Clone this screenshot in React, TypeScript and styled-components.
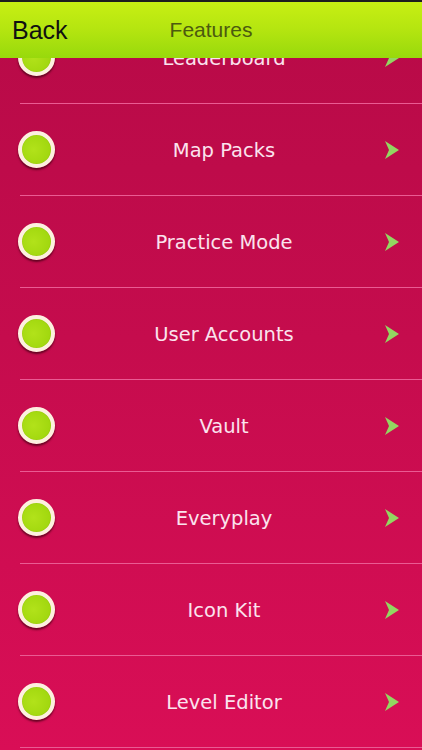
import React from 'react'
import styled, { createGlobalStyle } from 'styled-components'

const GlobalStyle = createGlobalStyle`
  html, body {
    margin: 0;
    padding: 0;
  }
  body {
    font-family: "DejaVu Sans", Verdana, sans-serif;
  }
`

const Screen = styled.div`
  position: relative;
  width: 422px;
  height: 750px;
  overflow: hidden;
  background: linear-gradient(180deg, #b70a47 0%, #c50c4d 45%, #d90e56 100%);
`

const Header = styled.header`
  position: absolute;
  top: 0;
  left: 0;
  right: 0;
  height: 58px;
  border-top: 2px solid #1e1e1e;
  box-sizing: border-box;
  background: linear-gradient(180deg, #c8ef13 0%, #b4e510 50%, #98d90c 100%);
  display: grid;
  grid-template-columns: 1fr auto 1fr;
  align-items: center;
  padding: 0 12px;
  z-index: 2;
`

const BackButton = styled.span`
  font-family: "Liberation Sans", Arial, sans-serif;
  font-size: 25px;
  color: #111;
  justify-self: start;
`

const Title = styled.span`
  font-family: "Liberation Sans", Arial, sans-serif;
  font-size: 21px;
  color: #4c5a0f;
`

const List = styled.ul`
  list-style: none;
  margin: 0;
  padding: 12px 0 0;
`

const Item = styled.li`
  display: block;
`

const Row = styled.div`
  height: 91px;
  display: flex;
  align-items: center;
  padding: 0 23px 0 18px;
`

const Bullet = styled.span`
  width: 37px;
  height: 37px;
  border-radius: 50%;
  box-sizing: border-box;
  border: 4px solid #fdf0df;
  background: radial-gradient(circle at 40% 50%, #b2e21a 0%, #a2d80f 70%, #93c90c 100%);
  box-shadow: 0 2px 2px rgba(70, 0, 20, 0.75), inset 0 0 1px rgba(0, 0, 0, 0.2);
  flex-shrink: 0;
`

const Label = styled.span`
  flex: 1;
  text-align: center;
  font-size: 19.5px;
  color: #fbe3ee;
  padding-left: 8px;
  margin-top: 2px;
`

const Divider = styled.div`
  height: 1px;
  margin-left: 20px;
  background: #ea5b93;
`

const Chevron = () => (
  <svg width="14" height="18" viewBox="0 0 14 18">
    <path d="M0 0 L14 9 L0 18 L4 9 Z" fill="#93d661" />
  </svg>
)

const features = [
  'Leaderboard',
  'Map Packs',
  'Practice Mode',
  'User Accounts',
  'Vault',
  'Everyplay',
  'Icon Kit',
  'Level Editor',
]

export default function App() {
  return (
    <Screen>
      <GlobalStyle />
      <Header>
        <BackButton>Back</BackButton>
        <Title>Features</Title>
        <span />
      </Header>
      <List>
        {features.map(name => (
          <Item key={name}>
            <Row>
              <Bullet />
              <Label>{name}</Label>
              <Chevron />
            </Row>
            <Divider />
          </Item>
        ))}
      </List>
    </Screen>
  )
}
